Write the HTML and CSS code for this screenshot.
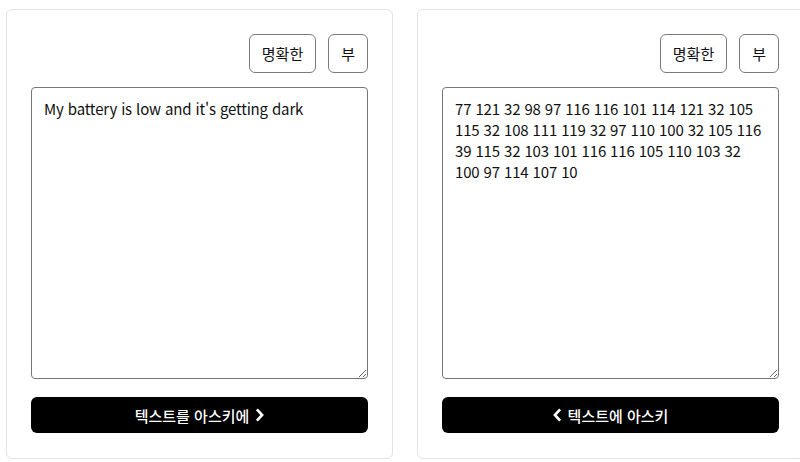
FILE: index.html
```html
<!DOCTYPE html>
<html lang="ko">

<head>
    <meta charset="UTF-8">
    <meta name="viewport" content="width=device-width, initial-scale=1.0">
    <title>텍스트를 아스키에</title>
    <link rel="stylesheet" href="styles.css">
</head>

<body>
    <div class="converter">
        <div class="card">
            <div class="tools">
                <button class="tool">명확한</button>
                <button class="tool">부</button>
            </div>
            <textarea class="field" spellcheck="false">My battery is low and it's getting dark</textarea>
            <button class="go">
                텍스트를 아스키에
                <svg class="chev" viewBox="0 0 10 16" width="9" height="14">
                    <path d="M2 1.5 L8 8 L2 14.5" fill="none" stroke="#fff" stroke-width="3" />
                </svg>
            </button>
        </div>

        <div class="card">
            <div class="tools">
                <button class="tool">명확한</button>
                <button class="tool">부</button>
            </div>
            <textarea class="field" spellcheck="false">77 121 32 98 97 116 116 101 114 121 32 105 115 32 108 111 119 32 97 110 100 32 105 116 39 115 32 103 101 116 116 105 110 103 32 100 97 114 107 10</textarea>
            <button class="go">
                <svg class="chev" viewBox="0 0 10 16" width="9" height="14">
                    <path d="M8 1.5 L2 8 L8 14.5" fill="none" stroke="#fff" stroke-width="3" />
                </svg>
                텍스트에 아스키
            </button>
        </div>
    </div>
</body>

</html>
```

FILE: styles.css
```css
* {
    box-sizing: border-box;
}

body {
    margin: 0;
    overflow: hidden;
    background: #fff;
    font-family: "Noto Sans CJK KR", "Noto Sans", sans-serif;
    color: #111;
}

.converter {
    display: flex;
    gap: 24px;
    padding: 9px 0 0 6px;
    width: 830px;
}

.card {
    flex: 0 0 387px;
    height: 450px;
    border: 1px solid #e3e3e3;
    border-radius: 6px;
    padding: 24px;
    display: flex;
    flex-direction: column;
}

.tools {
    display: flex;
    justify-content: flex-end;
    gap: 12px;
    margin-bottom: 14px;
}

.tool {
    height: 39px;
    min-width: 39px;
    padding: 0 12px;
    font-family: inherit;
    font-size: 15px;
    color: #111;
    background: #fff;
    border: 1px solid #7a7a7a;
    border-radius: 6px;
}

.field {
    display: block;
    width: 100%;
    height: 292px;
    padding: 10px 12px;
    font-family: inherit;
    font-size: 15px;
    letter-spacing: -0.15px;
    color: #111;
    border: 1px solid #767676;
    border-radius: 4px;
    resize: vertical;
    outline: none;
}

.go {
    margin-top: 18px;
    height: 36px;
    width: 100%;
    background: #000;
    color: #fff;
    border: none;
    border-radius: 6px;
    font-family: inherit;
    font-size: 15px;
    font-weight: 500;
    display: flex;
    align-items: center;
    justify-content: center;
    gap: 6px;
}

.chev {
    display: block;
}
```
